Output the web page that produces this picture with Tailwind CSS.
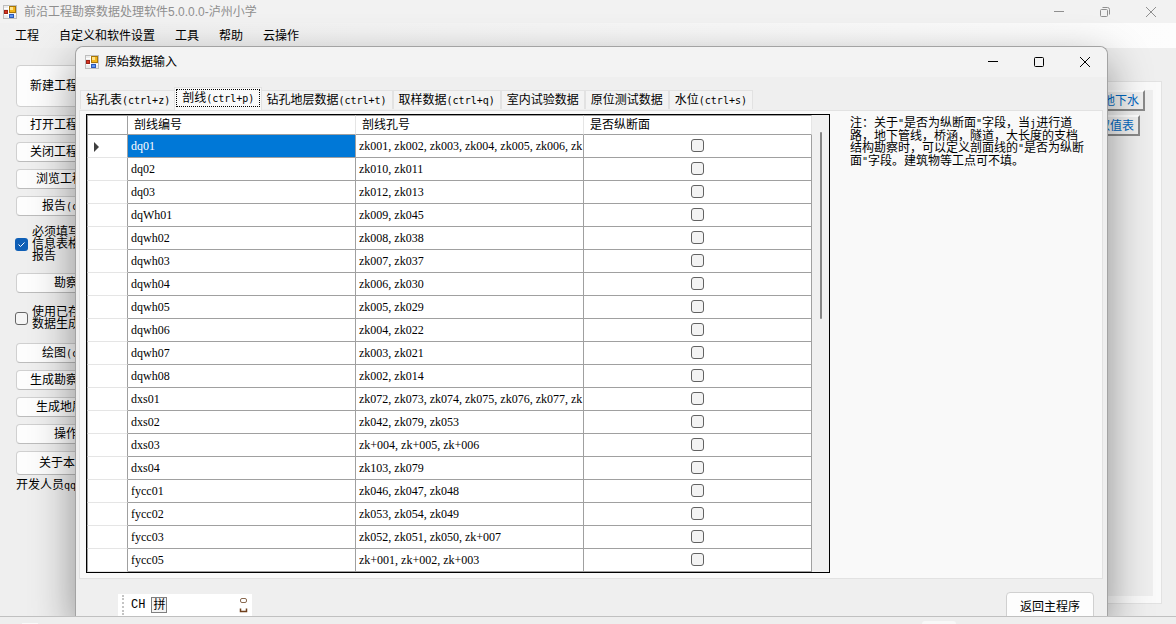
<!DOCTYPE html>
<html lang="zh-CN">
<head>
<meta charset="utf-8">
<title>前沿工程勘察数据处理软件</title>
<script src="https://cdn.jsdelivr.net/npm/@tailwindcss/browser@4"></script>
</head>
<body class="bg-[#efefef]">
<svg class="hidden">
  <symbol id="app" viewBox="0 0 14 14">
    <rect x=".5" y=".5" width="13" height="13" fill="#ececec" stroke="#bdbdbd"/>
    <path d="M5.500 1v12M1 9.500h12M1 3.500h4" stroke="#fff"/>
    <rect x="6.500" y="1.500" width="6" height="6" fill="#f3b51c" stroke="#a87708"/>
    <rect x="7" y="2" width="3" height="3" fill="#ffe48a"/>
    <rect x="1.500" y="5.500" width="3" height="3" fill="#d8341f" stroke="#9e2216"/>
    <rect x="6.500" y="9.500" width="4" height="3" fill="#5f96f2" stroke="#2c59b8"/>
  </symbol>
</svg>
<div class="flex flex-col h-screen overflow-hidden text-xs text-black font-['Liberation_Sans','Noto_Sans_CJK_SC',sans-serif]">
  <div class="relative flex flex-col flex-1 min-h-0 overflow-hidden">
    <header class="flex items-center h-[23px] shrink-0 bg-[#f2f2f2] pl-[3px] text-[#8f8f8f]">
      <svg class="size-[14px] mr-[7px]"><use href="#app"/></svg>
      <h1 class="flex-1">前沿工程勘察数据处理软件5.0.0.0-泸州小学</h1>
      <div class="flex items-center gap-9 pr-5">
        <button aria-label="最小化" class="block"><svg class="size-[10px]" fill="none" stroke="#8f8f8f"><path d="M0 4.500h10"/></svg></button>
        <button aria-label="还原" class="block"><svg class="size-[10px]" fill="none" stroke="#8f8f8f"><rect x=".5" y="2.500" width="7" height="7" rx="1"/><path d="M2.500.5h5a2 2 0 0 1 2 2v5"/></svg></button>
        <button aria-label="关闭" class="block"><svg class="size-[10px]" fill="none" stroke="#8f8f8f"><path d="M0 0l10 10M10 0L0 10"/></svg></button>
      </div>
    </header>
    <nav class="flex items-center gap-5 h-[25px] shrink-0 pl-[15px] bg-linear-to-r from-[#f0f0f0] to-[#fdfdfd]">
      <button>工程</button><button>自定义和软件设置</button><button>工具</button><button>帮助</button><button>云操作</button>
    </nav>
    <main class="flex justify-between flex-1 min-h-0">
      <div class="flex flex-col w-[116px] shrink-0 pl-4 pt-[17px] whitespace-nowrap">
        <button class="h-[42px] mb-2 pl-[13px] text-left bg-[#fdfdfd] border border-[#d0d0d0] rounded">新建工程</button>
        <div class="flex flex-col gap-[7px]">
          <button class="h-5 pl-[13px] text-left leading-4 bg-[#fdfdfd] border border-[#d0d0d0] border-b-[#bcbcbc] rounded">打开工程</button>
          <button class="h-5 pl-[13px] text-left leading-4 bg-[#fdfdfd] border border-[#d0d0d0] border-b-[#bcbcbc] rounded">关闭工程</button>
          <button class="h-5 pl-[19px] text-left leading-4 bg-[#fdfdfd] border border-[#d0d0d0] border-b-[#bcbcbc] rounded">浏览工程</button>
          <button class="h-5 pl-[25px] text-left leading-4 bg-[#fdfdfd] border border-[#d0d0d0] border-b-[#bcbcbc] rounded">报告<span class="font-['DejaVu_Sans_Mono',monospace] text-[10px]">(c</span></button>
        </div>
        <label class="flex items-center gap-1 h-14 mb-px -ml-px leading-3"><span class="grid size-[13px]"><input type="checkbox" checked class="col-start-1 row-start-1 appearance-none size-[13px] rounded-[3px] bg-[#0f5fb6]"><svg class="col-start-1 row-start-1 size-[13px] pointer-events-none" fill="none" stroke="#fff"><path d="M3.500 6.500l2 2 4-4"/></svg></span><span>必须填写<br>信息表格<br>报告</span></label>
        <button class="h-5 pl-[37px] text-left leading-4 bg-[#fdfdfd] border border-[#d0d0d0] border-b-[#bcbcbc] rounded">勘察</button>
        <label class="flex items-center gap-1 h-[50px] -ml-px leading-3"><input type="checkbox" class="appearance-none size-[13px] rounded-[3px] bg-[#f5f5f5] border border-[#666]"><span>使用已存<br>数据生成</span></label>
        <div class="flex flex-col gap-[7px]">
          <button class="h-5 pl-[25px] text-left leading-4 bg-[#fdfdfd] border border-[#d0d0d0] border-b-[#bcbcbc] rounded">绘图<span class="font-['DejaVu_Sans_Mono',monospace] text-[10px]">(c</span></button>
          <button class="h-5 pl-[13px] text-left leading-4 bg-[#fdfdfd] border border-[#d0d0d0] border-b-[#bcbcbc] rounded">生成勘察</button>
          <button class="h-5 pl-[19px] text-left leading-4 bg-[#fdfdfd] border border-[#d0d0d0] border-b-[#bcbcbc] rounded">生成地层</button>
          <button class="h-5 pl-[37px] text-left leading-4 bg-[#fdfdfd] border border-[#d0d0d0] border-b-[#bcbcbc] rounded">操作</button>
          <button class="h-6 pl-[22px] text-left bg-[#fdfdfd] border border-[#d0d0d0] border-b-[#bcbcbc] rounded">关于本</button>
        </div>
        <p class="mt-0.5 leading-4">开发人员<span class="font-['DejaVu_Sans_Mono',monospace] text-[10px]">qq</span></p>
      </div>
      <section class="w-[120px] mt-[33px] mb-3 mr-[14px] bg-[#fafafa] border border-[#e2e2e2] pt-2 pb-[7px] pr-2">
        <div class="flex flex-col items-end gap-1 h-full bg-[#efefef] pr-2 text-[#0067c0]">
          <button class="h-[21px] px-1 bg-[#f0f0f0] border-2 border-t-white border-l-white border-r-[#8a8a8a] border-b-[#8a8a8a] leading-4">地下水</button>
          <button class="h-[21px] mr-[5px] px-1 bg-[#f0f0f0] border-2 border-t-white border-l-white border-r-[#8a8a8a] border-b-[#8a8a8a] leading-4">取值表</button>
        </div>
      </section>
    </main>

    <div role="dialog" aria-labelledby="dlg" class="absolute left-[75px] right-[68px] top-[46px] bottom-0 flex flex-col bg-[#efefef] border border-b-0 border-[#a3a3a3] rounded-t-lg shadow-[0_16px_44px_rgba(0,0,0,0.42)]">
      <div class="flex items-center h-[30px] shrink-0 bg-[#f3f3f3] rounded-t-lg pl-[9px]">
        <svg class="size-[14px] mr-[6px]"><use href="#app"/></svg>
        <h2 id="dlg" class="flex-1">原始数据输入</h2>
        <div class="flex items-center gap-9 pr-[17px]">
          <button aria-label="最小化" class="block"><svg class="size-[10px]" fill="none" stroke="#000"><path d="M0 4.500h10"/></svg></button>
          <button aria-label="最大化" class="block"><svg class="size-[10px]" fill="none" stroke="#000"><rect x=".5" y=".5" width="9" height="9" rx="1"/></svg></button>
          <button aria-label="关闭" class="block"><svg class="size-[10px]" fill="none" stroke="#000"><path d="M0 0l10 10M10 0L0 10"/></svg></button>
        </div>
      </div>
      <div role="tablist" class="flex items-end shrink-0 pt-[10px] pl-1 whitespace-nowrap leading-4">
        <button role="tab" class="h-[19px] px-[5px] bg-[#f3f3f3] border border-b-0 border-[#e2e2e2]">钻孔表<span class="font-['DejaVu_Sans_Mono',monospace] text-[10px]">(ctrl+z)</span></button>
        <button role="tab" aria-selected="true" class="relative h-[23px] -mx-0.5 -mb-px px-px pt-px pb-[3px] bg-[#f9f9f9] border border-b-0 border-[#e2e2e2]"><span class="block h-[18px] px-[5px] border border-dotted border-black">剖线<span class="font-['DejaVu_Sans_Mono',monospace] text-[10px]">(ctrl+p)</span></span></button>
        <button role="tab" class="h-[19px] px-[5px] bg-[#f3f3f3] border border-b-0 border-[#e2e2e2]">钻孔地层数据<span class="font-['DejaVu_Sans_Mono',monospace] text-[10px]">(ctrl+t)</span></button>
        <button role="tab" class="h-[19px] px-[5px] bg-[#f3f3f3] border border-b-0 border-[#e2e2e2]">取样数据<span class="font-['DejaVu_Sans_Mono',monospace] text-[10px]">(ctrl+q)</span></button>
        <button role="tab" class="h-[19px] px-[5px] bg-[#f3f3f3] border border-b-0 border-[#e2e2e2]">室内试验数据</button>
        <button role="tab" class="h-[19px] px-[5px] bg-[#f3f3f3] border border-b-0 border-[#e2e2e2]">原位测试数据</button>
        <button role="tab" class="h-[19px] px-[5px] bg-[#f3f3f3] border border-b-0 border-[#e2e2e2]">水位<span class="font-['DejaVu_Sans_Mono',monospace] text-[10px]">(ctrl+s)</span></button>
      </div>
      <div role="tabpanel" class="flex flex-1 min-h-0 mt-px ml-[3px] mr-1 pl-[6px] pt-[3px] pb-[5px] gap-5 bg-[#f9f9f9] border border-[#e2e2e2]">
        <div class="flex w-[744px] shrink-0 border border-black bg-[#f0f0f0] overflow-hidden">
          <table class="w-[725px] shrink-0 self-start table-fixed border-separate border-spacing-0 bg-white text-left">
            <colgroup><col class="w-[41px]"><col><col><col></colgroup>
            <thead>
              <tr class="h-5 leading-4">
                <th class="p-0 border-l border-t border-r border-b border-[#a0a0a0]"></th>
                <th class="p-0 pl-[6px] font-normal border-t border-r border-b border-[#a0a0a0] border-r-[#e5e5e5]">剖线编号</th>
                <th class="p-0 pl-[6px] font-normal border-t border-r border-b border-[#a0a0a0] border-r-[#e5e5e5]">剖线孔号</th>
                <th class="p-0 pl-[6px] font-normal border-t border-r border-b border-[#a0a0a0] border-r-[#e5e5e5]">是否纵断面</th>
              </tr>
            </thead>
            <tbody id="rows" class="font-['Liberation_Serif',serif]"></tbody>
          </table>
          <div class="flex flex-1 justify-center pt-[17px]"><div class="w-0.5 h-[187px] bg-[#858585] rounded"></div></div>
        </div>
        <p class="pt-[3px] leading-3 whitespace-nowrap">注：关于<span class="font-['DejaVu_Sans_Mono',monospace] text-[10px]">"</span>是否为纵断面<span class="font-['DejaVu_Sans_Mono',monospace] text-[10px]">"</span>字段，当<span class="font-['DejaVu_Sans_Mono',monospace] text-[10px]">j</span>进行道<br>路，地下管线，桥涵，隧道，大长度的支档<br>结构勘察时，可以定义剖面线的<span class="font-['DejaVu_Sans_Mono',monospace] text-[10px]">"</span>是否为纵断<br>面<span class="font-['DejaVu_Sans_Mono',monospace] text-[10px]">"</span>字段。建筑物等工点可不填。</p>
      </div>
      <div class="flex items-start justify-between h-[37px] shrink-0 pl-[42px] pr-[13px] pt-[13px]">
        <div class="flex items-center w-[134px] h-[22px] mt-0.5 bg-white pl-1">
          <span class="h-5 border-l-2 border-dotted border-[#c4c4c4]"></span>
          <span class="ml-[7px] font-['Liberation_Mono',monospace]">CH</span>
          <button class="flex items-center justify-center size-4 ml-[6px] border border-[#808080] bg-[#f4f4f4]">拼</button>
          <svg class="w-[9px] h-4 ml-auto mr-1" fill="none" stroke="#8a6a50"><rect x="1.500" y="1.500" width="6" height="4" rx="1.500"/><path d="M1.500 11.500v3h6v-3" stroke="#70401c" stroke-width="1.500"/></svg>
        </div>
        <button class="w-[88px] h-[30px] shrink-0 bg-[#fdfdfd] border border-[#d0d0d0] rounded">返回主程序</button>
      </div>
    </div>
  </div>
  <footer class="flex items-end h-2 shrink-0 overflow-hidden bg-[#eeeeee] border-t border-[#c0c0c0]">
    <span class="w-4 h-px ml-[22px] bg-[#fafafa]"></span>
    <span class="w-[34px] h-[3px] ml-auto mr-[220px] bg-[#f8f8f8] rounded-t"></span>
  </footer>
</div>
<script>
const data = [
  ["dq01","zk001, zk002, zk003, zk004, zk005, zk006, zk"],["dq02","zk010, zk011"],["dq03","zk012, zk013"],
  ["dqWh01","zk009, zk045"],["dqwh02","zk008, zk038"],["dqwh03","zk007, zk037"],["dqwh04","zk006, zk030"],
  ["dqwh05","zk005, zk029"],["dqwh06","zk004, zk022"],["dqwh07","zk003, zk021"],["dqwh08","zk002, zk014"],
  ["dxs01","zk072, zk073, zk074, zk075, zk076, zk077, zk"],["dxs02","zk042, zk079, zk053"],["dxs03","zk+004, zk+005, zk+006"],
  ["dxs04","zk103, zk079"],["fycc01","zk046, zk047, zk048"],["fycc02","zk053, zk054, zk049"],
  ["fycc03","zk052, zk051, zk050, zk+007"],["fycc05","zk+001, zk+002, zk+003"]
];
document.getElementById("rows").innerHTML = data.map(([name, holes], i) => `
  <tr class="h-[23px] leading-4">
    <td class="p-0 border-l border-r border-b border-[#a0a0a0] border-b-[#e5e5e5]">${i ? "" : '<svg class="w-[5px] h-[10px] ml-[6px] mt-0.5"><path d="M0 0l5 5-5 5z" fill="#404040"/></svg>'}</td>
    <td class="p-0 pl-[3px] border-r border-b border-[#a0a0a0] ${i ? "" : "bg-[#0078d7] text-white"}">${name}</td>
    <td class="p-0 pl-[3px] border-r border-b border-[#a0a0a0] overflow-hidden whitespace-nowrap">${holes}</td>
    <td class="p-0 pb-px border-r border-b border-[#a0a0a0]"><input type="checkbox" aria-label="${name} 是否纵断面" class="appearance-none block mx-auto size-[13px] rounded-[3px] border border-[#626262] bg-[#f3f3f3]"></td>
  </tr>`).join("");
</script>
</body>
</html>
